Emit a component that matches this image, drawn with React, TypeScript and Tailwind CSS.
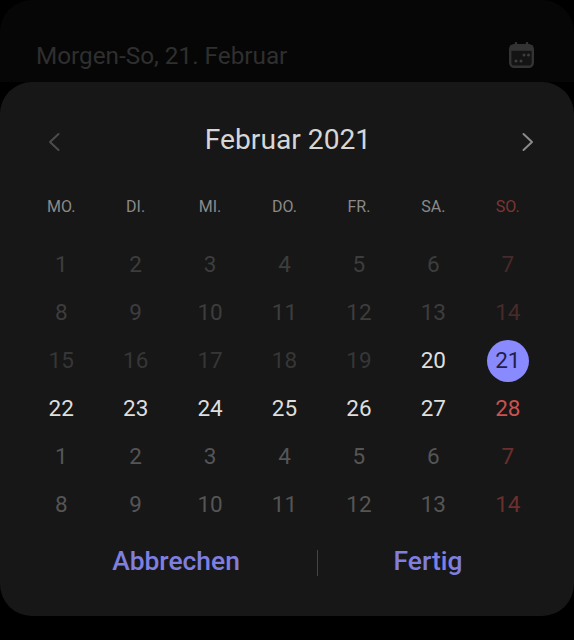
const weekdays = ['MO.', 'DI.', 'MI.', 'DO.', 'FR.', 'SA.', 'SO.'];

const rows: number[][] = [
  [1, 2, 3, 4, 5, 6, 7],
  [8, 9, 10, 11, 12, 13, 14],
  [15, 16, 17, 18, 19, 20, 21],
  [22, 23, 24, 25, 26, 27, 28],
  [1, 2, 3, 4, 5, 6, 7],
  [8, 9, 10, 11, 12, 13, 14],
];

function DayCell({ day, row, col }: { day: number; row: number; col: number }) {
  const sunday = col === 6;
  // the selected day gets a filled circle
  if (row === 2 && col === 6) {
    return (
      <div className="flex h-12 items-center justify-center">
        <span className="flex h-[42px] w-[42px] items-center justify-center rounded-full bg-[#8a8aff] text-[#1f2048]">{day}</span>
      </div>
    );
  }
  let color = 'text-[#555555]';
  if (row < 2) color = sunday ? 'text-[#472a2a]' : 'text-[#3d3d3d]';
  if (row === 2) color = col === 5 ? 'text-[#dedede]' : 'text-[#363636]';
  if (row === 3) color = sunday ? 'text-[#c9524f]' : 'text-[#dedede]';
  if (row > 3 && sunday) color = 'text-[#6b2f2e]';
  return <div className={`flex h-12 items-center justify-center ${color}`}>{day}</div>;
}

export default function App() {
  return (
    <div className="flex h-[640px] w-[574px] flex-col overflow-hidden bg-black font-['Roboto',sans-serif]">
      <div className="flex h-[82px] items-center justify-between rounded-t-[32px] bg-[#060606] pl-[36px] pr-[40px] pt-[30px]">
        <span className="text-[24.3px] text-[#2f2f2f]">Morgen-So, 21. Februar</span>
        <svg viewBox="0 0 25 26" className="mb-[2px] h-[26px] w-[25px]" fill="none">
          <path d="M7 1v3M18 1v3" stroke="#333333" strokeWidth="2.4" strokeLinecap="round" />
          <rect x="1.2" y="3.2" width="22.6" height="21.6" rx="4" fill="#141414" stroke="#333333" strokeWidth="2.4" />
          <path d="M1.2 3.2h22.6v5.6H1.2z" fill="#333333" />
          <circle cx="15" cy="13" r="1.5" fill="#3d3d3d" />
          <circle cx="19.5" cy="13" r="1.5" fill="#3d3d3d" />
          <circle cx="7" cy="19" r="1.5" fill="#3d3d3d" />
          <circle cx="12" cy="19" r="1.5" fill="#3d3d3d" />
        </svg>
      </div>

      <div className="flex h-[534px] flex-col rounded-[32px] bg-[#171717]">
        <div className="flex h-[116px] items-center justify-between pl-[47px] pr-[39px]">
          <svg viewBox="0 0 14 20" className="mt-[4px] h-[20px] w-[14px]" fill="none">
            <path d="M11.5 2 3 10l8.5 8" stroke="#4c4c4c" strokeWidth="2" strokeLinecap="round" strokeLinejoin="round" />
          </svg>
          <span className="mr-[6px] text-[28.2px] text-[#d6d6d6]">Februar 2021</span>
          <svg viewBox="0 0 14 20" className="mt-[4px] h-[20px] w-[14px]" fill="none">
            <path d="M2.5 2 11 10l-8.5 8" stroke="#8a8a8a" strokeWidth="2" strokeLinecap="round" strokeLinejoin="round" />
          </svg>
        </div>

        <div className="w-[545px] pl-[24px]">
          <div className="grid h-[18px] grid-cols-7 text-center text-[16px] leading-[18px] text-[#8a8a8a]">
            {weekdays.map((d) => (
              <span key={d} className={d === 'SO.' ? 'text-[#7d3533]' : ''}>{d}</span>
            ))}
          </div>
          <div className="mt-[25px] grid grid-cols-7 text-[22.5px]">
            {rows.map((row, r) =>
              row.map((day, c) => <DayCell key={`${r}-${c}`} day={day} row={r} col={c} />)
            )}
          </div>
        </div>

        <div className="mt-[13px] flex items-center pl-[35px] text-[26.4px] font-medium text-[#7f7fe0]">
          <div className="w-[282px] text-center">Abbrechen</div>
          <div className="mt-[2px] h-[26px] w-px bg-[#444444]" />
          <div className="w-[220px] text-center">Fertig</div>
        </div>
      </div>
    </div>
  );
}
